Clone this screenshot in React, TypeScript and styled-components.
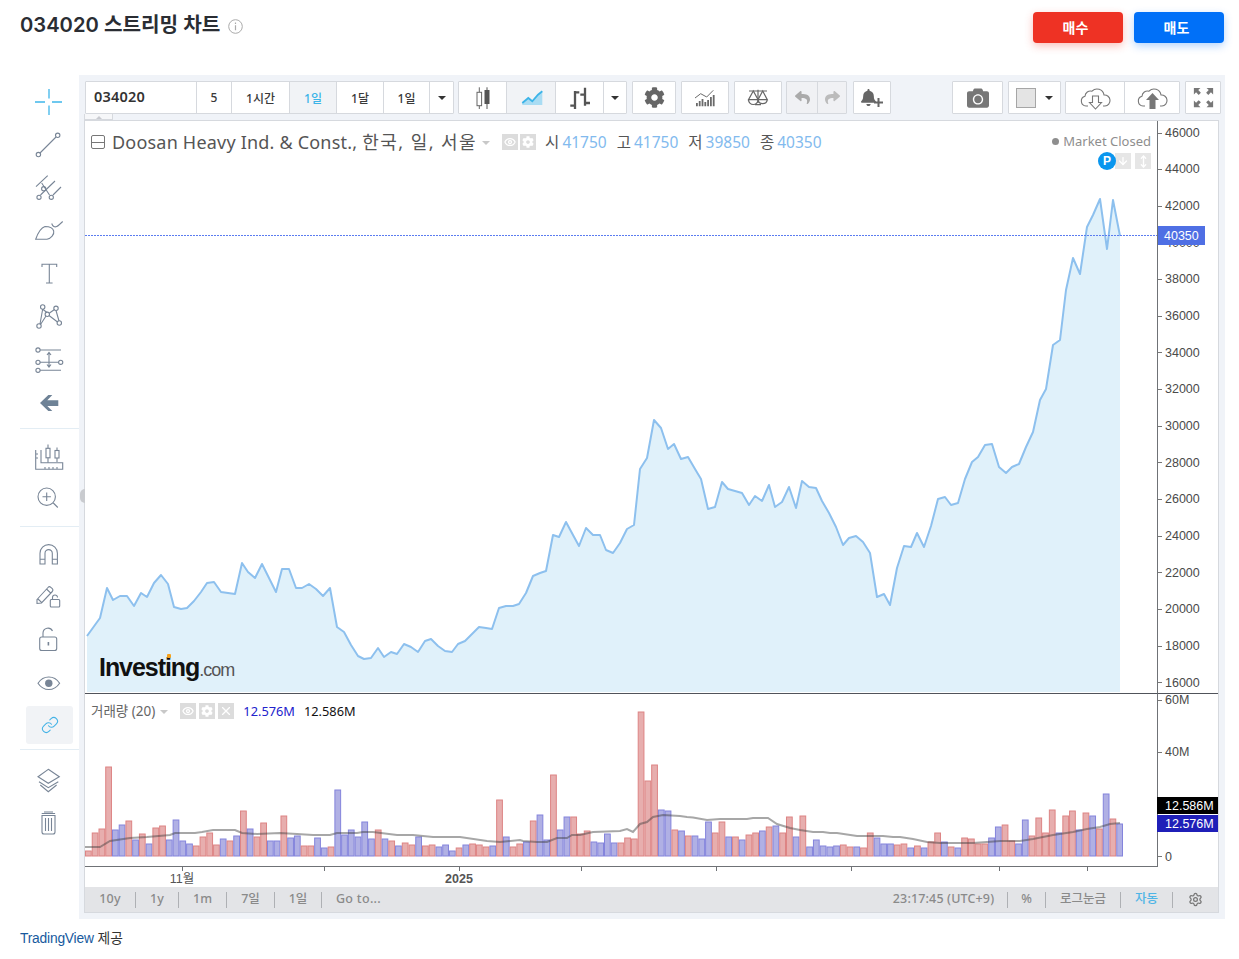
import React from 'react'
import styled, { createGlobalStyle } from 'styled-components'
import { Link, Settings, Eye, X, ArrowDown, MoveVertical } from 'lucide-react'
import { FaCog, FaCamera, FaBell, FaReply, FaShare } from 'react-icons/fa'

const UI = `"Noto Sans", "Noto Sans CJK KR", sans-serif`
const ARIAL = `"Liberation Sans", "Noto Sans CJK KR", sans-serif`

const linePoints = '87,636 100,618 107,588 113,600 120,596 127,596 134,606 141,593 147,597 154,583 161,575 168,584 174,607 181,609 187,608 194,601 201,592 207,583 214,582 221,592 228,593 235,594 242,563 248,572 255,578 262,564 269,578 276,592 282,569 289,569 296,588 302,588 309,584 316,589 323,596 330,588 337,627 344,632 351,645 358,656 364,659 371,658 378,648 384,657 391,652 397,654 404,644 411,647 418,652 425,641 431,639 438,646 445,651 452,652 458,644 465,641 472,634 479,627 486,628 492,629 499,608 506,606 513,606 519,604 526,593 533,576 540,573 546,571 553,535 559,537 566,522 573,535 579,546 586,528 593,535 600,535 606,550 613,553 620,543 627,529 634,525 640,469 647,458 654,420 661,428 668,449 674,444 681,459 688,457 695,469 701,479 708,509 715,507 722,482 728,489 735,491 742,493 749,505 755,496 762,501 769,485 775,507 782,502 789,487 796,508 802,481 809,487 816,488 822,501 829,513 836,527 843,545 849,538 856,536 863,542 870,553 877,597 884,594 890,605 897,568 904,546 911,547 917,533 924,547 931,526 938,499 945,497 951,505 958,503 965,479 972,462 978,457 985,445 992,444 999,467 1006,473 1012,467 1019,464 1026,447 1033,432 1040,400 1046,389 1053,345 1060,340 1066,290 1073,258 1080,274 1087,227 1093,215 1100,199 1107,249 1113,200 1120,236'

// positive = up day (red), negative = down day (blue)
const volumes = [
  5, 23, 27, 89, -26, -31, 35, -16, 22, -12, 28, 30, -16, -36, -15, -12, 10, 19, 23, 11, -17, 15, -20, 45, -27, 19, 33, -15, -15, 40,
  -18, -20, 10, 10, -18, -8, 9, -66, -21, -26, -19, -34, -17, 26, -17, 15, -10, 13, 11, -19, 10, 11, -9, -11, -5, 8, -11, 12, 11,
  9, -10, 56, -19, 9, 12, -14, 35, -41, -16, 81, -26, -39, 39, 22, 25, -14, -13, -22, -13, 13, 18, 17, 144, 75, 91, -46, -45, 26, -25, 20, -20, -17, -34, 23, 34, -19, 19, -16, 21, 23, -25, 29, -30, 23, 39, -19, 40,
  -9, -16, -10, -9, -10, 11, 9, -9, 8, 23, -18, -12, -12, 11, 12, -8, 10, -8, 14, 23, -14, 9, -8, 18, 17, 12, 12, -18, -29, 31, 15, -12, -36, 20, 38, 23, 46, -23, 40, 45, -26, 43, -40, 27, -62, 37, -32,
]
const volStep = 1038 / volumes.length

const maPoints = '85,847 100,847 110,841 130,838 147,837 170,835 175,833 195,833 202,832 213,830 235,830 242,833 257,834 280,833 297,834 313,835 330,835 337,833 357,833 363,832 373,832 397,835 413,835 433,837 460,837 487,841 500,842 520,840 523,841 537,842 547,842 557,838 567,838 572,835 580,835 593,832 620,831 627,829 633,832 640,824 647,822 653,817 663,815 680,816 687,817 693,817.5 707,820 720,819 747,819 753,818 768,818 777,824 790,828 800,830 813,832 823,832 830,833 837,833 857,836 867,836 883,836 893,837 900,837 913,839 927,842 940,843 973,843 987,842 1000,841 1020,841 1033,839 1053,835 1073,832 1087,829 1100,827 1110,824 1120,823'

const times: [number, string, boolean][] = [
  [182, '11월', false],
  [324, '', false],
  [459, '2025', true],
  [581, '', false],
  [716, '', false],
  [851, '', false],
  [999, '', false],
  [1087, '', false],
]

const prices = [46000, 44000, 42000, 40000, 38000, 36000, 34000, 32000, 30000, 28000, 26000, 24000, 22000, 20000, 18000, 16000]

const GlobalStyle = createGlobalStyle`
  html, body { margin: 0; padding: 0; background: #fff; }
  body { font-family: ${UI}; color: #333; }
  * { box-sizing: border-box; }
`

const Page = styled.div`
  width: 1239px;
`

const Header = styled.header`
  height: 75px;
  padding: 12px 15px 0 20px;
  display: flex;
  justify-content: space-between;
  align-items: flex-start;
`

const TitleRow = styled.div`
  display: flex;
  align-items: center;
  gap: 8px;
  height: 25px;
`

const Title = styled.h1`
  margin: 0;
  font: 600 20.2px/25px Inter, "Noto Sans CJK KR", sans-serif;
  color: #2a2d33;
`

const InfoSvg = styled.svg`
  margin-top: 4px;
`

const TradeButtons = styled.div`
  display: flex;
  gap: 11px;
`

const TradeButton = styled.button<{ $bg: string; $shadow: string }>`
  width: 90px;
  height: 31px;
  border: 0;
  border-radius: 4px;
  background: ${p => p.$bg};
  box-shadow: 0 3px 8px ${p => p.$shadow};
  color: #fff;
  font: 700 14px/31px ${UI};
  padding: 0 5px 0 0;
`

const Main = styled.div`
  display: flex;
  padding-left: 20px;
`

const Sidebar = styled.aside`
  width: 59px;
  flex: none;
`

const ToolGroup = styled.div<{ $top: number; $bottom?: number; $row: number; $line?: boolean }>`
  padding-top: ${p => p.$top}px;
  padding-bottom: ${p => p.$bottom ?? 0}px;
  border-bottom: ${p => (p.$line ? '1px solid #e3edf4' : '0')};
  & > div {
    height: ${p => p.$row}px;
  }
`

const ToolItem = styled.div`
  display: flex;
  align-items: center;
  justify-content: center;
  & > svg {
    margin-left: -3px;
    overflow: visible;
  }
`

const ActiveTool = styled.div`
  && {
    height: 38px;
  }
  width: 47px;
  margin: 2px 0 0 6px;
  background: #f1f3f6;
  border-radius: 3px;
  color: #45b3e6;
  display: flex;
  align-items: center;
  justify-content: center;
`

const Frame = styled.section`
  position: relative;
  width: 1146px;
  height: 844px;
  background: #f0f3f8;
  padding: 6px 6px 6px 5px;
`

const Handle = styled.div`
  position: absolute;
  left: 1px;
  top: 414px;
  width: 5px;
  height: 14px;
  background: #c9cbcf;
  border-radius: 5px 0 0 5px;
`

const Toolbar = styled.div`
  display: flex;
  height: 33px;
  margin-left: 1px;
  width: 1136px;
`

const BtnGroup = styled.div<{ $ml?: number; $muted?: boolean }>`
  display: flex;
  margin-left: ${p => p.$ml ?? 0}px;
  border: 1px solid #d6d9de;
  border-radius: 1px;
  background: ${p => (p.$muted ? '#f0f1f4' : '#fff')};
`

const Btn = styled.div<{ $w: number; $active?: boolean; $flat?: boolean }>`
  width: ${p => p.$w}px;
  display: flex;
  align-items: center;
  justify-content: center;
  background: ${p => (p.$active ? '#f1f3f6' : 'transparent')};
  color: ${p => (p.$active ? '#3cb4e8' : '#3a3a3a')};
  font: 500 12px/1 ${UI};
  padding-top: ${p => (p.$flat ? 0 : 3)}px;
  & + & {
    border-left: 1px solid #d6d9de;
  }
  & > svg {
    margin-top: -3px;
    overflow: visible;
  }
`

const Symbol = styled(Btn)`
  justify-content: flex-start;
  padding: 0 0 3px 8px;
  font: 600 14.5px/1 ${UI};
  letter-spacing: 0.2px;
  color: #333;
`

const Caret = styled.i`
  display: block;
  width: 0;
  height: 0;
  margin-top: -3px;
  border: 4px solid transparent;
  border-top: 4px solid #333;
  border-bottom: 0;
`

const Swatch = styled.i`
  display: block;
  width: 20px;
  height: 20px;
  margin: -3px 9px 0 0;
  background: #e4e4e4;
  border: 1.5px solid #a6a6a6;
`

const BellWrap = styled.span`
  position: relative;
  display: flex;
  margin: -3px 8px 0 0;
  & > svg:last-child {
    position: absolute;
    right: -6px;
    bottom: -1px;
  }
`

const ScrollTab = styled.div`
  width: 29px;
  height: 6px;
  background: #f6f7f9;
  border: 1px solid #d6d9de;
  border-top: 0;
  display: flex;
  justify-content: center;
  padding-top: 2px;
  &::after {
    content: '';
    border: 3px solid transparent;
    border-bottom: 3px solid #c8cad0;
    border-top: 0;
    height: 0;
  }
`

const ChartBox = styled.div`
  width: 1135px;
  height: 793px;
  background: #fff;
  border: 1px solid #d6d9de;
  display: grid;
  grid-template-columns: 1073px 60px;
  grid-template-rows: 573px 172px 21px 25px;
`

const Pane = styled.div<{ $sep?: boolean }>`
  position: relative;
  border-right: 1px solid #6f7276;
  border-bottom: ${p => (p.$sep ? '1px solid #50535a' : '0')};
  & > svg {
    display: block;
  }
`

const AxisCell = styled.div<{ $sep?: boolean; $pad: string }>`
  position: relative;
  display: flex;
  flex-direction: column;
  justify-content: space-between;
  padding: ${p => p.$pad};
  border-bottom: ${p => (p.$sep ? '1px solid #50535a' : '0')};
`

const AxisLabel = styled.div<{ $h: number }>`
  display: flex;
  align-items: center;
  height: ${p => p.$h}px;
  font: 12.5px/1 ${ARIAL};
  color: #4a4a4a;
  &::before {
    content: '';
    width: 4px;
    height: 1px;
    margin-right: 3px;
    background: #777;
  }
`

const LastPrice = styled.div`
  position: absolute;
  left: 0;
  top: 105px;
  width: 47px;
  height: 19px;
  padding-left: 6px;
  background: #4f6fe4;
  color: #fff;
  font: 12.5px/21px ${ARIAL};
`

const VolTag = styled.div<{ $top: number; $bg: string }>`
  position: absolute;
  left: -1px;
  right: 0;
  top: ${p => p.$top}px;
  height: 17px;
  padding-left: 8px;
  background: ${p => p.$bg};
  color: #fff;
  font: 12.5px/18px ${ARIAL};
`

const Legend = styled.div`
  position: absolute;
  left: 6px;
  top: 9px;
  display: flex;
  align-items: center;
  height: 24px;
  font: 18px/24px ${UI};
  letter-spacing: 0.2px;
  color: #555;
`

const HanText = styled.span`
  margin-left: 5px;
  letter-spacing: 1.45px;
`

const CollapseBox = styled.span`
  width: 14px;
  height: 14px;
  margin: 0 7px 0 0;
  border: 1px solid #777;
  border-radius: 2px;
  display: flex;
  align-items: center;
  &::after {
    content: '';
    flex: 1;
    height: 1px;
    background: #777;
  }
`

const LegendCaret = styled.i`
  width: 0;
  height: 0;
  margin: 2px 12px 0 5px;
  border: 4px solid transparent;
  border-top: 4px solid #c8c8c8;
  border-bottom: 0;
`

const GreyBox = styled.span<{ $ml?: number; $light?: boolean }>`
  width: 16px;
  height: 16px;
  margin-left: ${p => p.$ml ?? 2}px;
  background: ${p => (p.$light ? '#e6e6e6' : '#dcdcdc')};
  color: #fff;
  display: flex;
  align-items: center;
  justify-content: center;
  flex: none;
`

const Ohlc = styled.span<{ $ml: number }>`
  margin-left: ${p => p.$ml}px;
  font-size: 15.5px;
  letter-spacing: 0;
  display: flex;
  gap: 3px;
  & > b {
    font-weight: 400;
    color: #82baee;
  }
`

const MarketBox = styled.div`
  position: absolute;
  right: 6px;
  top: 11px;
  display: flex;
  flex-direction: column;
  align-items: flex-end;
`

const MarketText = styled.div`
  display: flex;
  align-items: center;
  gap: 4px;
  height: 19px;
  font: 13px/19px ${UI};
  color: #8e8e8e;
  &::before {
    content: '';
    width: 7px;
    height: 7px;
    border-radius: 50%;
    background: #8e8e8e;
  }
`

const MarketIcons = styled.div`
  display: flex;
  align-items: center;
  margin-top: 1px;
`

const PBadge = styled.span`
  width: 18px;
  height: 18px;
  margin-right: -1px;
  border-radius: 50%;
  background: #0a96ee;
  color: #fff;
  font: 700 12px/18px ${ARIAL};
  text-align: center;
  position: relative;
`

const Logo = styled.div`
  position: absolute;
  left: 14px;
  bottom: 8px;
  display: flex;
  align-items: baseline;
  font: 700 25px/30px ${ARIAL};
  letter-spacing: -1.05px;
  color: #111;
  & > span {
    font-weight: 400;
    font-size: 18px;
    color: #555;
    letter-spacing: -1px;
  }
  &::after {
    content: '';
    position: absolute;
    left: 68px;
    top: 2px;
    width: 4px;
    height: 4px;
    border-radius: 1px;
    background: #f7a21c;
  }
`

const VolLegend = styled.div`
  position: absolute;
  left: 6px;
  top: 8px;
  height: 18px;
  display: flex;
  align-items: center;
  font: 13.5px/18px ${UI};
  color: #666;
`

const VolValue = styled.span<{ $color: string; $ml: number }>`
  margin-left: ${p => p.$ml}px;
  font-size: 12.8px;
  color: ${p => p.$color};
`

const TimeAxis = styled.div`
  grid-column: 1 / 3;
  position: relative;
  &::before {
    content: '';
    display: block;
    width: 1073px;
    height: 1px;
    background: #6f7276;
  }
`

const TimeTick = styled.div<{ $x: number }>`
  position: absolute;
  left: ${p => p.$x - 85}px;
  top: 1px;
  width: 1px;
  height: 4px;
  background: #6f7276;
`

const TimeLabel = styled.div<{ $x: number; $strong?: boolean }>`
  position: absolute;
  left: ${p => p.$x - 85 - 30}px;
  width: 60px;
  top: 6px;
  text-align: center;
  font: ${p => (p.$strong ? 700 : 400)} 12.5px/15px ${ARIAL};
  color: #555;
`

const BottomBar = styled.div`
  grid-column: 1 / 3;
  display: flex;
  align-items: center;
  justify-content: space-between;
  background: #e3e4e7;
  font: 500 12.5px/1 ${UI};
  color: #8a8a8a;
`

const BarSide = styled.div`
  display: flex;
  align-items: center;
  height: 100%;
`

const BarItem = styled.span<{ $w?: number; $active?: boolean; $track?: number; $pr?: number }>`
  display: flex;
  align-items: center;
  justify-content: center;
  width: ${p => (p.$w ? `${p.$w}px` : 'auto')};
  height: 16px;
  padding-right: ${p => p.$pr ?? 0}px;
  letter-spacing: ${p => p.$track ?? 0}px;
  color: ${p => (p.$active ? '#4fb5e6' : 'inherit')};
  white-space: nowrap;
  & + & {
    border-left: 1px solid #aeb0b4;
  }
`

const Footer = styled.footer`
  padding: 10px 0 0 20px;
  font: 13.8px/19px ${ARIAL};
  color: #333;
  & > a {
    color: #175a9e;
    text-decoration: none;
    letter-spacing: -0.2px;
  }
`

const stroke = { fill: 'none', stroke: '#788596', strokeWidth: 1.1 }

const Ic = ({ children, size = 28, vb = '0 0 28 28' }: { children: React.ReactNode; size?: number; vb?: string }) => (
  <svg width={size} height={size} viewBox={vb}>
    {children}
  </svg>
)

const Crosshair = () => (
  <Ic>
    <path d="M15 1v9.500M15 17.500V27M1 14h10M18 14h10" fill="none" stroke="#3fb6ea" strokeWidth="1.3" />
  </Ic>
)

const TrendLine = () => (
  <Ic>
    <g {...stroke}>
      <path d="M6 22 22 6" />
      <circle cx="4.400" cy="23.600" r="2.200" />
      <circle cx="23.700" cy="4.300" r="2.200" />
    </g>
  </Ic>
)

const Fork = () => (
  <Ic>
    <g {...stroke}>
      <path d="M2 12.700 13.700 1.700M6.500 21 21 7M19 21l8-8M7.700 9 15.500 21" />
      <circle cx="5" cy="23.300" r="2.100" />
      <circle cx="17.300" cy="23.300" r="2.100" />
      <circle cx="9.700" cy="14.700" r="2.100" />
    </g>
  </Ic>
)

const Brush = () => (
  <Ic>
    <g {...stroke}>
      <path d="M1.700 22.300H13C17 21.500 20.500 17.500 19.700 14 19 11.500 15.500 9.500 11 9.500 6.500 11 3.500 17 1.700 22.300z" />
      <path d="M17.700 6.500c1 3 3 4 5 3s4-3 6-5" />
    </g>
  </Ic>
)

const TextTool = () => (
  <Ic>
    <path d="M8 7V4.300h14.700V7M15.300 4.300V23M12 23h6.600" {...stroke} />
  </Ic>
)

const Web = () => (
  <Ic>
    <g {...stroke}>
      <path d="M8.700 6.300 13 9.500M8.700 6 6 21M6.500 21.500 12 13M15.500 10 20.500 6.500M22 7.500 25 18M15 12.500 23.500 19" />
      <circle cx="8.700" cy="4" r="2.200" />
      <circle cx="22" cy="5.300" r="2.200" />
      <circle cx="13.300" cy="11.300" r="2.200" />
      <circle cx="25.300" cy="20" r="2.200" />
      <circle cx="5" cy="23" r="2.200" />
    </g>
  </Ic>
)

const Fib = () => (
  <Ic>
    <g {...stroke}>
      <path d="M6 4h21M6 16.300h18.700M6 24.300h21M15 6.500v14M13 9l2-2.500L17 9M13 18.500l2 2.500 2-2.500" />
      <circle cx="4" cy="4" r="2.100" />
      <circle cx="4" cy="16.300" r="2.100" />
      <circle cx="26.700" cy="16.300" r="2.100" />
      <circle cx="4" cy="24.300" r="2.100" />
    </g>
  </Ic>
)

const BackArrow = () => (
  <Ic>
    <path d="M6 14 14.300 6h4l-5 5.300h11V17h-11l5 5h-4z" fill="#6e8296" />
  </Ic>
)

const Measure = () => (
  <Ic>
    <g {...stroke}>
      <path d="M1.700 6v19.300h27V18.700H7V6M1.700 10H4M1.700 14H4M11 25v-2M15 25v-2M19 25v-2M23 25v-2" />
      <rect x="12" y="4.300" width="4" height="9.500" />
      <path d="M14 .5v3.800M14 13.800v4.900M23 3.500v3M23 14v4" />
      <rect x="21" y="6.500" width="4" height="7.500" />
    </g>
  </Ic>
)

const ZoomIn = () => (
  <Ic>
    <g {...stroke}>
      <circle cx="12.700" cy="12.700" r="8.700" />
      <path d="M12.700 8.500v8.400M8.500 12.700h8.400M19.300 19l4.500 4.500" />
    </g>
  </Ic>
)

const Magnet = () => (
  <Ic>
    <g {...stroke}>
      <path d="M6 24V13.300a8.700 8.700 0 0 1 17.400 0V24h-5.100V13.300a3.600 3.600 0 0 0-7.300 0V24zM6 19.300h5M18.300 19.300h5.100" />
    </g>
  </Ic>
)

const PencilLock = () => (
  <Ic>
    <g {...stroke}>
      <path d="M3 16.500 14 4.500a2 2 0 0 1 2.800-.2l1.500 1.400a2 2 0 0 1 0 2.800L7.500 20 3 20.500zM12.500 6l4.500 4.300M4 16l3.800 3.700" />
      <rect x="16.300" y="16.500" width="9.400" height="7.500" rx="1" />
      <path d="M18.500 16.500v-2a2.500 2.500 0 0 1 5 0" />
    </g>
  </Ic>
)

const OpenLock = () => (
  <Ic>
    <g {...stroke}>
      <rect x="5.700" y="11" width="17" height="13.500" rx="2" />
      <path d="M9 11V7a5 5 0 0 1 9.500-2" />
    </g>
    <rect x="13.600" y="16" width="1.600" height="3.500" fill="#788596" />
  </Ic>
)

const EyeIcon = () => (
  <Ic>
    <path d="M4 14.200C7 9.700 11 8 14.800 8s7.800 1.700 10.800 6.200c-3 4.500-7 6.300-10.800 6.300S7 18.700 4 14.200z" {...stroke} />
    <circle cx="14.800" cy="14.200" r="3.700" fill="#788596" />
  </Ic>
)

const LayersIcon = () => (
  <Ic>
    <g {...stroke}>
      <path d="M14.300 3.300 25.300 10.700 14.300 17.300 4 10.700z" />
      <path d="M5 15.700l9.300 6 10-6M6.300 19l8 6.700 8.300-6.700" />
    </g>
  </Ic>
)

const Trash = () => (
  <Ic>
    <g {...stroke}>
      <path d="M7.700 4.500h13.400M10 3h9" />
      <path d="M8 6.500h13V23a2 2 0 0 1-2 2H10a2 2 0 0 1-2-2zM11.500 9v13M14.500 9v13M17.500 9v13" />
    </g>
  </Ic>
)

const Candles = () => (
  <Ic>
    <path d="M10.300 3.300v5M10.300 21.700V25" stroke="#666" fill="none" />
    <rect x="8" y="8.300" width="4.600" height="13.400" fill="#fff" stroke="#666" />
    <path d="M18 3.300V25" stroke="#555" />
    <rect x="15.500" y="6" width="5" height="14" fill="#555" />
  </Ic>
)

const AreaIcon = () => (
  <Ic>
    <path d="M5.300 19 11.300 14 15.300 17.300 21 10.700 25.300 7.300V21H5.300z" fill="#a9dcf3" />
    <path d="M5.300 19 11.300 14 15.300 17.300 21 10.700 25.300 7.300" fill="none" stroke="#3cb4e8" strokeWidth="1.800" />
  </Ic>
)

const Bars = () => (
  <Ic>
    <path d="M9 7v18M4.300 21.700H9M9 8.300h4.300M19 3.700v18M14.300 10.700H19M19 19h5" fill="none" stroke="#555" strokeWidth="2.300" />
  </Ic>
)

const Indicators = () => (
  <Ic>
    <path d="M5 19h1.800v3.300H5zM7.800 17h1.800v5.300H7.800zM10.600 15h1.800v7.300h-1.800zM13.400 18h1.800v4.300h-1.800zM16.200 16h1.800v6.300h-1.800zM19 13h1.800v9.300H19zM21.800 11h1.800v11.300h-1.800z" fill="#6a6a6a" />
    <path d="M4 14 9.700 9.700 15.700 13 22.300 6.300" fill="none" stroke="#6a6a6a" />
  </Ic>
)

const Compare = () => (
  <Ic>
    <g fill="none" stroke="#666" strokeWidth="1.200">
      <path d="M14 5.700V19M5 7h18M11 20.700h6" />
      <path d="M9.300 7 4.500 15.700h9.600zM18.700 7l-4.700 8.700h9.300zM4.500 15.700a4.800 4.800 0 0 0 9.600 0M14 15.700a4.700 4.700 0 0 0 9.300 0" />
    </g>
  </Ic>
)

const Cloud = ({ filled }: { filled?: boolean }) => (
  <svg width="31" height="24" viewBox="0 0 31 24">
    <path
      d="M8 20H6a5 5 0 0 1-1-9.800 5.500 5.500 0 0 1 7-5 7 7 0 0 1 12 3.800 5.500 5.500 0 0 1 1 11h-2"
      fill="none"
      stroke="#777"
      strokeWidth="1.100"
    />
    {filled ? (
      <path d="M15.500 7 9 14h3.500v9h6v-9H22z" fill="#777" />
    ) : (
      <path d="M12.500 10v6.500H9.500l6 6.500 6-6.500h-3V10z" fill="#fff" stroke="#777" strokeWidth="1.100" />
    )}
  </svg>
)

const Fullscreen = () => (
  <Ic size={21} vb="0 0 24 24">
    <path d="M1 1h7.500L6 3.500 9 6.500 6.500 9l-3-3L1 8.500zM23 1v7.500L20.500 6l-3 3L15 6.500l3-3L15.500 1zM1 23v-7.500L3.500 18l3-3L9 17.500l-3 3L8.500 23zM23 23h-7.500l2.500-2.500-3-3 2.500-2.500 3 3 2.500-2.500z" fill="#777" />
  </Ic>
)

const InfoIcon = () => (
  <InfoSvg width="15" height="15" viewBox="0 0 15 15">
    <circle cx="7.500" cy="7.500" r="6.800" fill="none" stroke="#aaa" />
    <path d="M7.500 6.300v5M7.500 3.500v1.500" stroke="#aaa" strokeWidth="1.200" />
  </InfoSvg>
)

const BellPlus = () => (
  <BellWrap>
    <FaBell size={17} color="#666" />
    <svg width="9" height="9" viewBox="0 0 9 9">
      <path d="M3.500 0h2v3.500H9v2H5.500V9h-2V5.500H0v-2h3.500z" fill="#666" />
    </svg>
  </BellWrap>
)

const PriceChart = () => {
  const area = `87,692 ${linePoints} 1120,692`
  return (
    <svg width="1072" height="572" viewBox="85 121 1072 572">
      <polygon points={area} fill="#e0f1fa" />
      <polyline points={linePoints} fill="none" stroke="#8dc0ee" strokeWidth="2" strokeLinejoin="round" />
      <line x1="85" x2="1157" y1="235.500" y2="235.500" stroke="#5b7cf0" strokeDasharray="2 1" />
    </svg>
  )
}

const VolumeChart = () => (
  <svg width="1072" height="172" viewBox="85 694 1072 172">
    {volumes.map((v, i) => (
      <rect
        key={i}
        x={85 + i * volStep + 0.5}
        y={856 - Math.abs(v)}
        width={volStep - 1}
        height={Math.abs(v)}
        fill={v > 0 ? '#e7aeae' : '#b0b0e4'}
        stroke={v > 0 ? '#dd8484' : '#8484dc'}
      />
    ))}
    <polyline points={maPoints} fill="none" stroke="rgba(60,60,60,0.45)" strokeWidth="2" />
  </svg>
)

const App = () => {
  return (
    <Page>
      <GlobalStyle />
      <Header>
        <TitleRow>
          <Title>034020 스트리밍 차트</Title>
          <InfoIcon />
        </TitleRow>
        <TradeButtons>
          <TradeButton $bg="#ee3224" $shadow="rgba(238,50,36,.3)">매수</TradeButton>
          <TradeButton $bg="#0070f8" $shadow="rgba(0,112,248,.3)">매도</TradeButton>
        </TradeButtons>
      </Header>
      <Main>
        <Sidebar>
          <ToolGroup $top={5} $bottom={4} $row={43} $line>
            <ToolItem><Crosshair /></ToolItem>
            <ToolItem><TrendLine /></ToolItem>
            <ToolItem><Fork /></ToolItem>
            <ToolItem><Brush /></ToolItem>
            <ToolItem><TextTool /></ToolItem>
            <ToolItem><Web /></ToolItem>
            <ToolItem><Fib /></ToolItem>
            <ToolItem><BackArrow /></ToolItem>
          </ToolGroup>
          <ToolGroup $top={9} $bottom={8} $row={40} $line>
            <ToolItem><Measure /></ToolItem>
            <ToolItem><ZoomIn /></ToolItem>
          </ToolGroup>
          <ToolGroup $top={5} $bottom={5} $row={43} $line>
            <ToolItem><Magnet /></ToolItem>
            <ToolItem><PencilLock /></ToolItem>
            <ToolItem><OpenLock /></ToolItem>
            <ToolItem><EyeIcon /></ToolItem>
            <ActiveTool><Link size={18} strokeWidth={1.4} /></ActiveTool>
          </ToolGroup>
          <ToolGroup $top={8} $row={43}>
            <ToolItem><LayersIcon /></ToolItem>
            <ToolItem><Trash /></ToolItem>
          </ToolGroup>
        </Sidebar>
        <Frame>
          <Handle />
          <Toolbar>
            <BtnGroup>
              <Symbol $w={110}>034020</Symbol>
              <Btn $w={35} $flat>5</Btn>
              <Btn $w={58}>1시간</Btn>
              <Btn $w={47} $active>1일</Btn>
              <Btn $w={47}>1달</Btn>
              <Btn $w={46}>1일</Btn>
              <Btn $w={24}><Caret /></Btn>
            </BtnGroup>
            <BtnGroup $ml={4}>
              <Btn $w={47}><Candles /></Btn>
              <Btn $w={49} $active><AreaIcon /></Btn>
              <Btn $w={48}><Bars /></Btn>
              <Btn $w={23}><Caret /></Btn>
            </BtnGroup>
            <BtnGroup $ml={5}>
              <Btn $w={42}><FaCog size={21} color="#666" /></Btn>
            </BtnGroup>
            <BtnGroup $ml={5}>
              <Btn $w={46}><Indicators /></Btn>
            </BtnGroup>
            <BtnGroup $ml={5}>
              <Btn $w={46}><Compare /></Btn>
            </BtnGroup>
            <BtnGroup $ml={4} $muted>
              <Btn $w={30}><FaReply size={15} color="#aaa" /></Btn>
              <Btn $w={29}><FaShare size={15} color="#bbb" /></Btn>
            </BtnGroup>
            <BtnGroup $ml={6}>
              <Btn $w={36}><BellPlus /></Btn>
            </BtnGroup>
            <BtnGroup $ml={61}>
              <Btn $w={49}><FaCamera size={22} color="#777" /></Btn>
            </BtnGroup>
            <BtnGroup $ml={5}>
              <Btn $w={51}><Swatch /><Caret /></Btn>
            </BtnGroup>
            <BtnGroup $ml={4}>
              <Btn $w={58}><Cloud /></Btn>
              <Btn $w={55}><Cloud filled /></Btn>
            </BtnGroup>
            <BtnGroup $ml={5}>
              <Btn $w={34}><Fullscreen /></Btn>
            </BtnGroup>
          </Toolbar>
          <ScrollTab />
          <ChartBox>
            <Pane $sep>
              <PriceChart />
              <Legend>
                <CollapseBox />
                Doosan Heavy Ind. &amp; Const.,
                <HanText>한국, 일, 서울</HanText>
                <LegendCaret />
                <GreyBox $ml={0}><Eye size={12} strokeWidth={2.500} /></GreyBox>
                <GreyBox><FaCog size={12} /></GreyBox>
                <Ohlc $ml={9}>시<b>41750</b></Ohlc>
                <Ohlc $ml={10}>고<b>41750</b></Ohlc>
                <Ohlc $ml={10}>저<b>39850</b></Ohlc>
                <Ohlc $ml={10}>종<b>40350</b></Ohlc>
              </Legend>
              <MarketBox>
                <MarketText>Market Closed</MarketText>
                <MarketIcons>
                  <PBadge>P</PBadge>
                  <GreyBox $ml={0} $light><ArrowDown size={12} strokeWidth={2.500} /></GreyBox>
                  <GreyBox $ml={4} $light><MoveVertical size={13} strokeWidth={2.500} /></GreyBox>
                </MarketIcons>
              </MarketBox>
              <Logo>
                Investing<span>.com</span>
              </Logo>
            </Pane>
            <AxisCell $sep $pad="4px 0 2px">
              {prices.map(p => (
                <AxisLabel key={p} $h={16}>{p}</AxisLabel>
              ))}
              <LastPrice>40350</LastPrice>
            </AxisCell>
            <Pane>
              <VolumeChart />
              <VolLegend>
                거래량 (20)
                <LegendCaret />
                <GreyBox $ml={0}><Eye size={12} strokeWidth={2.500} /></GreyBox>
                <GreyBox $ml={3}><FaCog size={12} /></GreyBox>
                <GreyBox $ml={3}><X size={14} strokeWidth={2} /></GreyBox>
                <VolValue $color="#2222cc" $ml={9}>12.576M</VolValue>
                <VolValue $color="#111" $ml={9}>12.586M</VolValue>
              </VolLegend>
            </Pane>
            <AxisCell $pad="1px 0 4px">
              <AxisLabel $h={10}>60M</AxisLabel>
              <AxisLabel $h={10}>40M</AxisLabel>
              <AxisLabel $h={10}>20M</AxisLabel>
              <AxisLabel $h={10}>0</AxisLabel>
              <VolTag $top={103} $bg="#000">12.586M</VolTag>
              <VolTag $top={121} $bg="#1f1fb8">12.576M</VolTag>
            </AxisCell>
            <TimeAxis>
              {times.map(([x, label, strong]) => (
                <React.Fragment key={x}>
                  <TimeTick $x={x} />
                  {label && <TimeLabel $x={x} $strong={strong}>{label}</TimeLabel>}
                </React.Fragment>
              ))}
            </TimeAxis>
            <BottomBar>
              <BarSide>
                <BarItem $w={50} $track={0.2}>10y</BarItem>
                <BarItem $w={43}>1y</BarItem>
                <BarItem $w={48}>1m</BarItem>
                <BarItem $w={48}>7일</BarItem>
                <BarItem $w={47}>1일</BarItem>
                <BarItem $w={74} $track={0.3}>Go to...</BarItem>
              </BarSide>
              <BarSide>
                <BarItem $w={124} $track={0.15} $pr={3}>23:17:45 (UTC+9)</BarItem>
                <BarItem $w={38}>%</BarItem>
                <BarItem $w={75}>로그눈금</BarItem>
                <BarItem $w={52} $active>자동</BarItem>
                <BarItem $w={46}><Settings size={15} color="#777" strokeWidth={2} /></BarItem>
              </BarSide>
            </BottomBar>
          </ChartBox>
        </Frame>
      </Main>
      <Footer>
        <a>TradingView</a> 제공
      </Footer>
    </Page>
  )
}

export default App
